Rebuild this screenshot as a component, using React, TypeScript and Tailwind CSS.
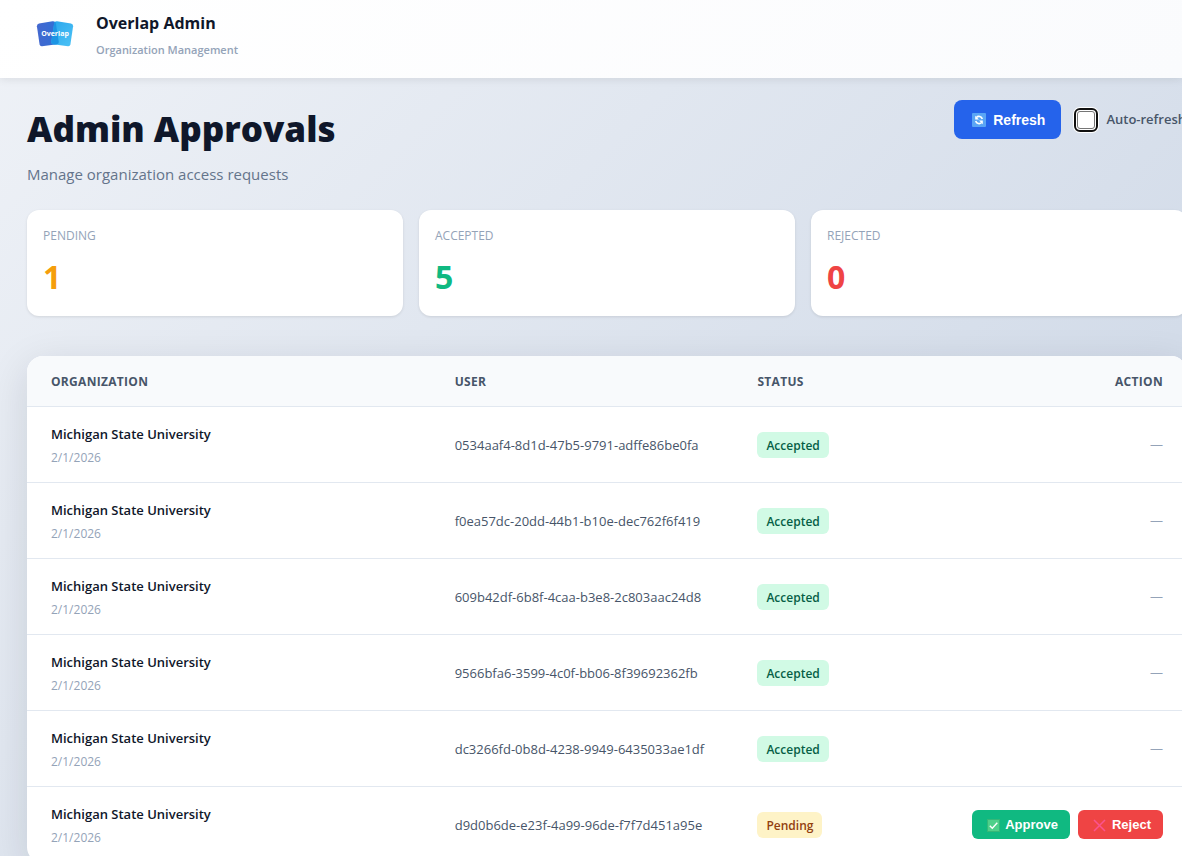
type Status = "Accepted" | "Pending";

interface AccessRequest {
  organization: string;
  date: string;
  user: string;
  status: Status;
}

const requests: AccessRequest[] = [
  { organization: "Michigan State University", date: "2/1/2026", user: "0534aaf4-8d1d-47b5-9791-adffe86be0fa", status: "Accepted" },
  { organization: "Michigan State University", date: "2/1/2026", user: "f0ea57dc-20dd-44b1-b10e-dec762f6f419", status: "Accepted" },
  { organization: "Michigan State University", date: "2/1/2026", user: "609b42df-6b8f-4caa-b3e8-2c803aac24d8", status: "Accepted" },
  { organization: "Michigan State University", date: "2/1/2026", user: "9566bfa6-3599-4c0f-bb06-8f39692362fb", status: "Accepted" },
  { organization: "Michigan State University", date: "2/1/2026", user: "dc3266fd-0b8d-4238-9949-6435033ae1df", status: "Accepted" },
  { organization: "Michigan State University", date: "2/1/2026", user: "d9d0b6de-e23f-4a99-96de-f7f7d451a95e", status: "Pending" },
];

const stats = [
  { label: "Pending", value: 1, color: "text-[#f59e0b]" },
  { label: "Accepted", value: 5, color: "text-[#10b981]" },
  { label: "Rejected", value: 0, color: "text-[#ef4444]" },
];

function Logo() {
  return (
    <svg viewBox="0 0 38 28" className="h-7 w-[38px]" role="img" aria-label="Overlap">
      <defs>
        <linearGradient id="logo-left" x1="0" y1="0" x2="1" y2="0">
          <stop offset="0" stopColor="#4468cf" />
          <stop offset="1" stopColor="#2f6fd6" />
        </linearGradient>
        <linearGradient id="logo-right" x1="0" y1="0" x2="1" y2="1">
          <stop offset="0" stopColor="#2aa5ec" />
          <stop offset="1" stopColor="#4cc3f6" />
        </linearGradient>
      </defs>
      <path d="M3 3.6 16.500 1.300Q19 1 19.800 3L22.800 22Q22.900 24 21 24.300L6 26.300Q4 26.500 3.600 24.500L0.900 6.300Q0.800 4 3 3.600Z" fill="url(#logo-left)" />
      <path d="M21 1.200 35 3.600Q37.300 4 37.100 6.300L34.400 24.500Q34 26.500 32 26.300L17 24.300Q15.200 24 15.200 22L18.200 3Q18.800 1 21 1.200Z" fill="url(#logo-right)" />
      <path d="M18.800 1.800Q19.600 1.800 19.800 3L22.800 22Q22.900 24 21 24.300L19 24.500 17 24.300Q15.200 24 15.200 22L18.200 3Z" fill="#1d95e4" />
      <text x="19" y="16" textAnchor="middle" fontFamily="Open Sans, sans-serif" fontWeight="700" fontSize="7" fill="#fff">
        Overlap
      </text>
    </svg>
  );
}

function RefreshIcon() {
  return (
    <svg viewBox="0 0 14 14" className="size-3.5" aria-hidden="true">
      <rect width="14" height="14" rx="1" fill="#5aa5f5" />
      <path d="M10.300 6A3.500 3.500 0 0 0 4.400 4.500M3.700 8A3.500 3.500 0 0 0 9.600 9.500" fill="none" stroke="#fff" strokeWidth="1.600" />
      <path d="M3.200 2.800V6.500H6.900ZM10.800 11.200V7.500H7.100Z" fill="#fff" />
    </svg>
  );
}

function CheckIcon() {
  return (
    <svg viewBox="0 0 13 13" className="size-[13px]" aria-hidden="true">
      <rect x="0.500" y="0.500" width="12" height="12" fill="#4fd08a" stroke="#35b878" />
      <path d="M2.800 6.800 5.300 9.300 10.300 3.800" fill="none" stroke="#fff" strokeWidth="1.400" />
    </svg>
  );
}

function CrossIcon() {
  return (
    <svg viewBox="0 0 13 13" className="size-[13px]" aria-hidden="true">
      <path d="M1 1 12 12M12 1 1 12" fill="none" stroke="#fb5390" strokeWidth="1.500" />
    </svg>
  );
}

function StatusBadge({ status }: { status: Status }) {
  const tone = status === "Accepted" ? "bg-[#d1fae5] text-[#065f46]" : "bg-[#fef3c7] text-[#92400e]";
  return (
    <span className={`inline-block rounded-md px-[9px] pt-[5px] pb-[3px] text-xs leading-[18px] font-semibold ${tone}`}>{status}</span>
  );
}

export default function App() {
  return (
    <div className="min-h-screen overflow-x-clip bg-linear-135 from-[#eff2f7] to-[#c9d4e4] font-['Open_Sans','Noto_Sans',sans-serif] text-[#0f172a]">
      <header className="relative flex h-[78px] items-start gap-[22px] bg-linear-135 from-white to-[#fafbfd] pl-9 shadow-[0_2px_8px_rgba(0,0,0,0.08)]">
        <div className="pt-5">
          <Logo />
        </div>
        <div className="pt-2.5">
          <p className="text-base leading-[26px] font-bold">Overlap Admin</p>
          <p className="pt-[5px] text-[11px] leading-[18px] font-semibold text-[#94a3b8]">Organization Management</p>
        </div>
      </header>

      <main className="-mr-[5px] pb-4 pl-[27px]">
        <div className="flex items-start justify-between pt-[22px]">
          <div>
            <h1 className="pt-1 text-[35px] leading-[50px] font-extrabold">Admin Approvals</h1>
            <p className="pt-2 text-[15px] leading-6 text-[#64748b]">Manage organization access requests</p>
          </div>
          <div className="flex items-center gap-[13px]">
            <button
              type="button"
              className="flex h-[39px] items-center gap-[7px] rounded-lg bg-[#2563eb] px-4 pl-[18px] font-['Liberation_Sans',Arial,sans-serif] text-sm font-bold text-white"
            >
              <RefreshIcon />
              Refresh
            </button>
            <label className="flex items-center gap-2 pr-px text-[13px] font-semibold whitespace-nowrap text-[#475569]">
              <input
                type="checkbox"
                className="m-[3px] size-[18px] appearance-none rounded-[3px] border border-[#767676] bg-white shadow-[0_0_0_1px_white,0_0_0_4px_white] outline-2 outline-offset-1 outline-[#101010]"
              />
              Auto-refresh
            </label>
          </div>
        </div>

        <section className="grid grid-cols-3 gap-4 pt-6" aria-label="Request totals">
          {stats.map((stat) => (
            <div key={stat.label} className="h-[106px] rounded-xl bg-white px-4 pt-[17px] shadow-[0_1px_3px_rgba(0,0,0,0.1)]">
              <p className="text-xs leading-[18px] font-medium text-[#94a3b8] uppercase">{stat.label}</p>
              <p className={`pt-2.5 text-[32px] leading-[44px] font-bold ${stat.color}`}>{stat.value}</p>
            </div>
          ))}
        </section>

        <div className="mt-10 overflow-hidden rounded-2xl bg-white shadow-[0_10px_40px_rgba(15,23,42,0.12)]">
          <table className="w-full table-fixed border-separate border-spacing-0 text-left">
            <thead className="bg-[#f8fafc] text-xs text-[#475569] uppercase">
              <tr className="h-[51px] *:border-b *:border-[#e2e8f0] *:px-6 *:pt-0.5 *:font-bold *:tracking-wide">
                <th className="w-[34.8%]">Organization</th>
                <th className="w-[26.1%]">User</th>
                <th className="w-[14%]">Status</th>
                <th className="text-right">Action</th>
              </tr>
            </thead>
            <tbody>
              {requests.map((request) => (
                <tr key={request.user} className="h-[76px] *:border-b *:border-[#e2e8f0] *:px-6 last:*:border-b-transparent">
                  <td className="pt-0.5">
                    <p className="text-[13px] leading-5 font-semibold">{request.organization}</p>
                    <p className="pt-[5px] text-xs leading-[18px] text-[#94a3b8]">{request.date}</p>
                  </td>
                  <td className="pt-0.5 text-[13px] whitespace-nowrap text-[#475569]">{request.user}</td>
                  <td>
                    <StatusBadge status={request.status} />
                  </td>
                  <td className="text-right text-[13px] text-[#94a3b8]">
                    {request.status === "Pending" ? (
                      <div className="flex justify-end gap-2 font-['Liberation_Sans',Arial,sans-serif] font-bold text-white">
                        <button type="button" className="flex h-[29px] items-center gap-[5px] rounded-md bg-[#10b981] pt-px pr-3 pl-[15px]">
                          <CheckIcon />
                          Approve
                        </button>
                        <button type="button" className="flex h-[29px] items-center gap-[6px] rounded-md bg-[#ef4444] pt-px pr-3 pl-[15px]">
                          <CrossIcon />
                          Reject
                        </button>
                      </div>
                    ) : (
                      "—"
                    )}
                  </td>
                </tr>
              ))}
            </tbody>
          </table>
        </div>
      </main>
    </div>
  );
}
